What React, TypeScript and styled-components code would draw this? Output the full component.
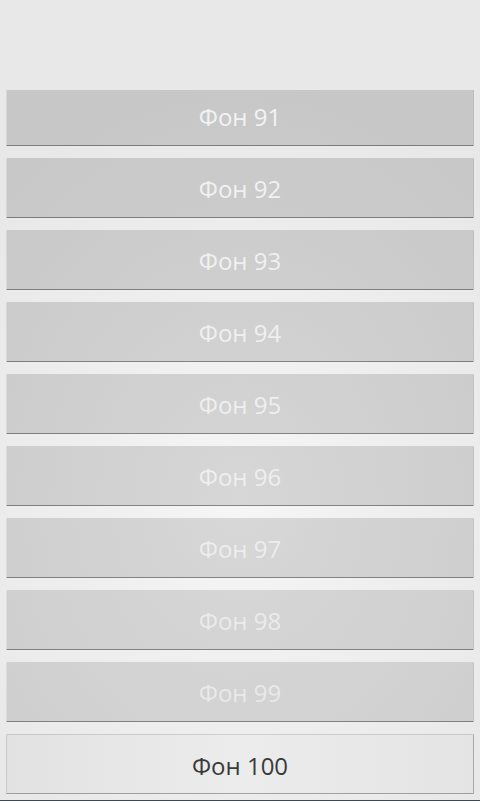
import React from "react";
import styled, { createGlobalStyle, css } from "styled-components";

const Global = createGlobalStyle`
  html, body { margin: 0; padding: 0; height: 100%; }
  body {
    font-family: "Open Sans", Roboto, "Liberation Sans", sans-serif;
    background: #e8e8e8;
  }
  #root { height: 100%; }
`;

const Screen = styled.div`
  width: 480px;
  height: 801px;
  display: flex;
  flex-direction: column;
  overflow: hidden;
  background: radial-gradient(ellipse 340px 420px at 240px 500px, #f6f6f6 0%, #efefef 45%, #e8e8e8 100%);
`;

const Header = styled.div`
  height: 90px;
  flex: none;
`;

const Scroller = styled.div`
  flex: 1;
  overflow: hidden;
  padding: 0 6px;
`;

const List = styled.div`
  display: flex;
  flex-direction: column;
  gap: 12px;
  margin-top: -4px;
`;

const Item = styled.button<{ $fade: number; $selected?: boolean }>`
  height: 60px;
  width: 468px;
  box-sizing: border-box;
  margin: 0;
  padding: 2px 0 0;
  display: flex;
  align-items: center;
  justify-content: center;
  font-family: "Open Sans", Roboto, "Liberation Sans", sans-serif;
  font-size: 24px;
  font-weight: 400;
  letter-spacing: 0;
  border: none;
  border-radius: 1px;
  ${({ $selected, $fade }) =>
    $selected
      ? css`
          background: linear-gradient(to right, #e2e2e2, #ececec 50%, #e4e4e4);
          color: #3a3a3a;
          border: 1px solid rgba(0, 0, 0, 0.12);
          border-right-color: rgba(0, 0, 0, 0.25);
          border-bottom-color: rgba(0, 0, 0, 0.3);
        `
      : css`
          background: rgba(0, 0, 0, ${0.14 - $fade * 0.025});
          color: rgba(255, 255, 255, ${0.8 - $fade * 0.28});
          border-left: 1px solid rgba(255, 255, 255, 0.25);
          border-right: 1px solid rgba(0, 0, 0, 0.06);
          border-bottom: 1px solid rgba(0, 0, 0, 0.38);
        `}
`;

const BottomLine = styled.div`
  height: 1px;
  flex: none;
  background: #3b4856;
`;

export default function App() {
  const items = Array.from({ length: 10 }, (_, i) => 91 + i);
  return (
    <>
      <Global />
      <Screen>
        <Header />
        <Scroller>
          <List>
            {items.map((n, i) => (
              <Item key={n} $fade={i / 8} $selected={n === 100}>
                Фон {n}
              </Item>
            ))}
          </List>
        </Scroller>
        <BottomLine />
      </Screen>
    </>
  );
}
